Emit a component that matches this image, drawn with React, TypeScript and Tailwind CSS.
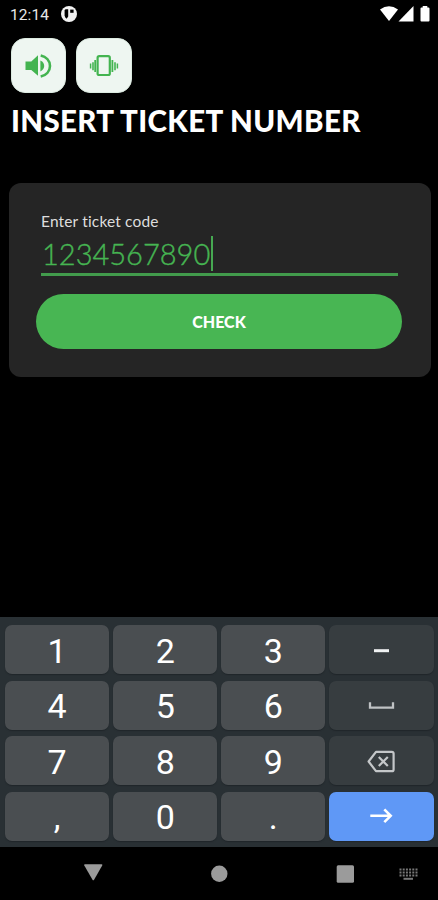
import type { ReactNode } from "react";

const digitRows = [
  ["1", "2", "3"],
  ["4", "5", "6"],
  ["7", "8", "9"],
  [",", "0", "."],
];

function StatusBar() {
  return (
    <div className="flex h-[38px] items-start justify-between pl-[10px] pr-[7px] pt-[6px] text-white">
      <div className="flex items-center gap-[12px]">
        <span className="font-[Roboto,sans-serif] text-[15.5px] leading-[18px] tracking-[0.1px] text-[#e8e8e8]">12:14</span>
        <svg width="16" height="16" viewBox="0 0 16 16" className="-mt-[2px]">
          <circle cx="8" cy="8" r="8" fill="#f2f2f2" />
          <path d="M3.6 4.6q0-1.4 1.6-1.4h2v7.4l-1.6 2.2q-2-1.4-2-3.6z" fill="#000" />
          <path d="M9.2 3.6h3.4v3.2H9.2z" fill="#000" />
        </svg>
      </div>
      <svg width="51" height="17" viewBox="0 0 51 17" fill="#fff">
        <path d="M0 3.6Q9 -3 18 3.6L9 15z" />
        <path d="M18.5 15.5L33.5 0v15.5z" />
        <path d="M40.5 2.4q0-1 1-1h1.2V0h4.6v1.4h1.2q1 0 1 1v12.1q0 1-1 1h-7q-1 0-1-1z" />
      </svg>
    </div>
  );
}

function ToggleButton({ label, children }: Readonly<{ label: string; children: ReactNode }>) {
  return (
    <button
      aria-label={label}
      className="flex h-[55px] w-[55px] items-center justify-center rounded-[14px] border border-[#dcebe1] bg-[#eef6f1] last:w-[56px]"
    >
      {children}
    </button>
  );
}

function SoundIcon() {
  return (
    <svg width="28" height="28" viewBox="0 0 28 28" fill="#43b450">
      <path d="M.5 9.5h5.8L13 3.2v20.6L6.3 18H.5z" />
      <path d="M15.4 8.6q3.8 2 3.8 5.4t-3.8 5.4z" />
      <path d="M15.7 3.4C21 4.7 25 8.7 25 14s-4 9.3-9.3 10.6" fill="none" stroke="#43b450" strokeWidth="2.6" />
    </svg>
  );
}

function VibrateIcon() {
  return (
    <svg width="30" height="24" viewBox="0 0 30 24" fill="none" stroke="#43b450">
      <rect x="8.6" y="2.2" width="12.2" height="18.8" rx="1.6" strokeWidth="2.2" />
      <path d="M1.6 9.4v5M28.4 9.4v5" strokeWidth="1.5" />
      <path d="M4 8.2v8M26 8.2v8" strokeWidth="1.6" />
      <path d="M6.2 6v12M23.4 6v12" strokeWidth="1.8" />
    </svg>
  );
}

function TicketForm() {
  return (
    <div className="ml-[8.5px] mr-[7.5px] mt-[43.5px] h-[194px] rounded-[12px] bg-[#252525] px-[28px] pt-[28px]">
      <div className="mx-[4.5px]">
        <label className="block text-[15.5px] leading-[20px] tracking-[0.16px] text-[#dedede] [font-variant-ligatures:none]">
          Enter ticket code
        </label>
        <div className="mt-[5px] flex h-[40.5px] items-start border-b-[3.5px] border-[#429b4c]">
          <span className="w-[169.5px] whitespace-nowrap pl-px text-[29px] font-light leading-[36px] text-[#46b552] [-webkit-text-stroke:0.4px_#46b552]">
            1234567890
          </span>
          <span className="h-[35px] w-[2.5px] bg-[#46a851]" />
        </div>
      </div>
      <button className="-ml-[0.5px] mt-[18px] flex h-[54.5px] w-[366px] items-center justify-center rounded-full bg-[#48b653] pt-px text-[16px] font-black text-white">
        CHECK
      </button>
    </div>
  );
}

function Key({ children, tone = "bg-[#4a4e51]" }: Readonly<{ children: ReactNode; tone?: string }>) {
  return (
    <button className={`flex h-[49px] items-center justify-center rounded-[7px] text-[34px] leading-none text-white shadow-[0_1px_1px_#20262a] ${tone}`}>
      {children}
    </button>
  );
}

const sideKeys = [
  <svg key="minus" width="28" height="28" viewBox="0 0 28 28">
    <path d="M7 14.7h15" stroke="#f0f2f3" strokeWidth="3" />
  </svg>,
  <svg key="space" width="28" height="28" viewBox="0 0 28 28">
    <path d="M3 11.3v5.3h23v-5.3" fill="none" stroke="#bfc2c4" strokeWidth="2.3" />
  </svg>,
  <svg key="delete" width="28" height="28" viewBox="0 0 28 28" fill="none" stroke="#c4c7c9">
    <path d="M9 4.8h15.8q1.8 0 1.8 1.8v15.8q0 1.8-1.8 1.8H9L1.6 14.5z" strokeWidth="2.2" strokeLinejoin="round" />
    <path d="M11.8 10l9 9m0-9l-9 9" strokeWidth="2.2" />
  </svg>,
  <svg key="enter" width="28" height="28" viewBox="0 0 28 28" fill="none" stroke="#fff" strokeWidth="2.6">
    <path d="M3.3 13.8h20M17.3 7.4l6.4 6.4-6.4 6.4" />
  </svg>,
];

function Keyboard() {
  return (
    <div className="mt-auto grid h-[230px] grid-cols-4 content-start gap-x-[4px] gap-y-[6.5px] bg-[#293034] pl-[5px] pr-[4.5px] pt-[8px] font-[Roboto,sans-serif]">
      {digitRows.map((row, i) => (
        <div key={row[0]} className="contents">
          {row.map((digit) => (
            <Key key={digit}>
              <span className="pt-[2px]">{digit}</span>
            </Key>
          ))}
          <Key tone={i === 3 ? "bg-[#5f98f6]" : "bg-[#373d40]"}>{sideKeys[i]}</Key>
        </div>
      ))}
    </div>
  );
}

function NavBar() {
  return (
    <div className="h-[53px] bg-black">
      <svg width="438" height="53" viewBox="0 0 438 53" fill="#9b9b9b">
        <path d="M85 17.3h16.5q1.3 0 .7 1.2l-8.1 14.2q-.8 1.2-1.6 0l-8.2-14.2q-.6-1.2.7-1.2z" />
        <circle cx="219.3" cy="26.7" r="8.2" />
        <rect x="336.7" y="18.3" width="17.3" height="17.4" rx="1.5" />
        <g stroke="#777" strokeWidth="2">
          <path d="M399.5 22.5h18M399.5 25.5h18M399.5 28.5h18" strokeDasharray="2 1.2" />
          <path d="M403.5 31.8h9.5" />
        </g>
      </svg>
    </div>
  );
}

export default function App() {
  return (
    <div className="flex h-[900px] w-[438px] flex-col overflow-hidden bg-black font-[Lato,sans-serif]">
      <StatusBar />
      <div className="flex gap-[10px] pl-[11px]">
        <ToggleButton label="Sound">
          <SoundIcon />
        </ToggleButton>
        <ToggleButton label="Vibration">
          <VibrateIcon />
        </ToggleButton>
      </div>
      <h1 className="mt-[10px] whitespace-nowrap pl-[11px] text-[29.5px] font-black leading-[36px] tracking-[0.35px] text-white">
        INSERT TICKET NUMBER
      </h1>
      <TicketForm />
      <Keyboard />
      <NavBar />
    </div>
  );
}
